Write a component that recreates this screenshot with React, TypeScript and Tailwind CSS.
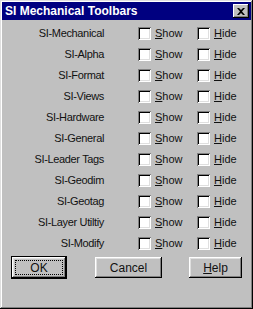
import React, { useState } from "react";

const rows = [
  "SI-Mechanical",
  "SI-Alpha",
  "SI-Format",
  "SI-Views",
  "SI-Hardware",
  "SI-General",
  "SI-Leader Tags",
  "SI-Geodim",
  "SI-Geotag",
  "SI-Layer Utiltiy",
  "SI-Modify",
];

function Check({ label, checked, onClick }: { label: string; checked: boolean; onClick: () => void }) {
  return (
    <button className="flex items-center gap-[4px]" onClick={onClick}>
      <span className="w-[13px] h-[13px] bg-white shadow-[inset_1px_1px_#808080,inset_-1px_-1px_#fff,inset_2px_2px_#000,inset_-2px_-2px_#dfdfdf] flex items-center justify-center text-[10px] leading-none">
        {checked ? "✓" : ""}
      </span>
      <span>
        <span className="underline">{label[0]}</span>
        {label.slice(1)}
      </span>
    </button>
  );
}

export default function App() {
  const [state, setState] = useState<Record<string, boolean>>({});
  const toggle = (k: string) => setState((s) => ({ ...s, [k]: !s[k] }));

  const btn =
    "h-[21px] bg-[#c0c0c0] shadow-[inset_-1px_-1px_#000,inset_1px_1px_#fff,inset_-2px_-2px_#808080,inset_2px_2px_#dfdfdf] flex items-center justify-center text-[12px]";

  return (
    <div
      className="w-[253px] h-[309px] bg-[#c0c0c0] p-[2px] flex flex-col text-[11px] text-[#111] shadow-[inset_-1px_-1px_#000,inset_1px_1px_#dfdfdf,inset_-2px_-2px_#808080,inset_2px_2px_#fff]"
      style={{ fontFamily: '"Liberation Sans", Arial, sans-serif' }}
    >
      <div className="h-[18px] bg-[#000080] flex items-center justify-between pl-[3px] pr-[2px]">
        <span className="text-white font-bold text-[12px]">SI Mechanical Toolbars</span>
        <span className="w-[16px] h-[14px] bg-[#c0c0c0] shadow-[inset_-1px_-1px_#000,inset_1px_1px_#fff,inset_-2px_-2px_#808080] flex items-center justify-center">
          <svg width="8" height="7" viewBox="0 0 8 7">
            <path d="M0 0h2l2 2 2-2h2L5 3.5 8 7H6L4 5 2 7H0l3-3.5z" fill="#000" />
          </svg>
        </span>
      </div>
      <div className="flex flex-col pt-[3px]">
        {rows.map((r) => (
          <div key={r} className="h-[21px] flex items-center">
            <div className="w-[102px] text-right tracking-[-0.35px]">{r}</div>
            <div className="ml-[34px] w-[59px]">
              <Check label="Show" checked={!!state[r + "s"]} onClick={() => toggle(r + "s")} />
            </div>
            <div>
              <Check label="Hide" checked={!!state[r + "h"]} onClick={() => toggle(r + "h")} />
            </div>
          </div>
        ))}
      </div>
      <div className="flex items-center mt-[2px] pl-[9px]">
        <button className="w-[56px] h-[23px] border border-black flex">
          <span className={btn + " w-full h-full p-[3px]"}>
            <span className="w-full h-full border border-dotted border-black flex items-center justify-center">OK</span>
          </span>
        </button>
        <button className={btn + " w-[67px] ml-[28px]"}>Cancel</button>
        <button className={btn + " w-[53px] ml-[27px]"}>
          <span>
            <span className="underline">H</span>elp
          </span>
        </button>
      </div>
    </div>
  );
}
